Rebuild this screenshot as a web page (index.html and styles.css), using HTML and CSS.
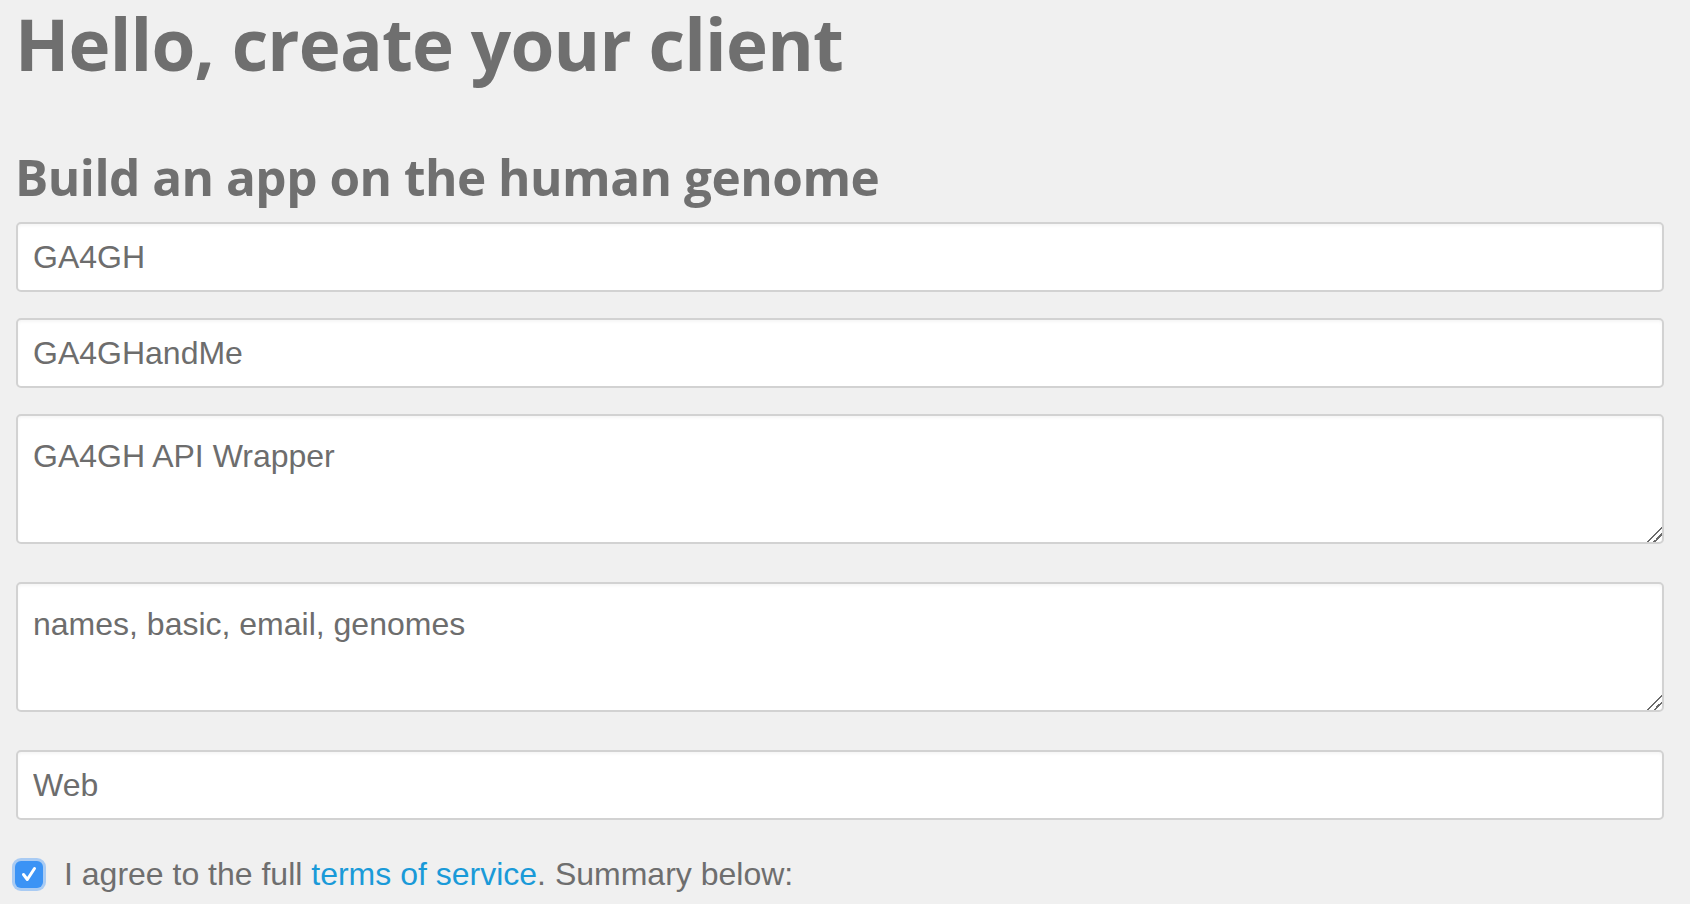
FILE: index.html
```html
<!DOCTYPE html>
<html lang="en">
<head>
<meta charset="utf-8">
<title>Hello, create your client</title>
<link rel="stylesheet" href="styles.css">
</head>
<body>
<main class="page">
  <h1 class="title">Hello, create your client</h1>
  <h2 class="subtitle">Build an app on the human genome</h2>
  <form class="client-form">
    <input class="field" type="text" value="GA4GH">
    <input class="field" type="text" value="GA4GHandMe">
    <textarea class="field area">GA4GH API Wrapper</textarea>
    <textarea class="field area">names, basic, email, genomes</textarea>
    <input class="field" type="text" value="Web">
    <label class="agree">
      <span class="check"><svg viewBox="0 0 28 28" width="28" height="28"><path d="M8.5 14.5 L12.3 19.5 L19.5 8.5" fill="none" stroke="#fff" stroke-width="3" stroke-linecap="round" stroke-linejoin="round"/></svg></span>
      <span class="agree-text">I agree to the full <a class="link" href="#">terms of service</a>. Summary below:</span>
    </label>
  </form>
</main>
</body>
</html>
```
FILE: styles.css
```css
html, body {
  margin: 0;
  padding: 0;
  background: #f0f0f0;
}
body {
  color: #6e6e6e;
  font-family: "Liberation Sans", Arial, sans-serif;
}
.page {
  width: 1648px;
  padding: 0 0 0 16px;
}
.title {
  font-family: "Open Sans", Lato, sans-serif;
  font-weight: 700;
  font-size: 71px;
  line-height: 88px;
  padding-bottom: 10px;
  margin: 0 0 0 -1px;
  color: #6f6f6f;
  letter-spacing: -0.8px;
}
.subtitle {
  font-family: "Open Sans", Lato, sans-serif;
  font-weight: 700;
  font-size: 49.5px;
  line-height: normal;
  margin: 45px 0 0 -1px;
  color: #707070;
  letter-spacing: -0.5px;
}
.client-form {
  display: flex;
  flex-direction: column;
  margin-top: 11px;
}
.field {
  box-sizing: border-box;
  width: 1648px;
  height: 70px;
  margin: 0 0 26px 0;
  padding: 0 15px;
  border: 2px solid #d2d2d2;
  border-radius: 5px;
  background: #fff;
  box-shadow: inset 0 2px 3px rgba(0,0,0,0.04);
  color: #6d6d6d;
  font-family: "Liberation Sans", Arial, sans-serif;
  font-size: 32px;
  outline: none;
}
.area {
  height: 130px;
  padding: 22px 15px 0;
  line-height: 1.15;
  resize: vertical;
  margin-bottom: 38px;
}
.area::-webkit-resizer {
  background: linear-gradient(135deg, transparent 0 48%, #6a6a6a 48% 56%, transparent 56% 70%, #6a6a6a 70% 78%, transparent 78%);
}
.agree {
  display: flex;
  align-items: center;
  margin-top: 10px;
  font-size: 32px;
  color: #6e6e6e;
}
.check {
  display: flex;
  align-items: center;
  justify-content: center;
  width: 28px;
  height: 27px;
  margin-left: -1px;
  margin-right: 21px;
  background: #3b93f5;
  border-radius: 6px;
  box-shadow: 0 0 0 3px #a9cbf3;
}
.agree-text {
  line-height: 1.15;
}
.link {
  color: #1a9ad8;
  text-decoration: none;
}
```
